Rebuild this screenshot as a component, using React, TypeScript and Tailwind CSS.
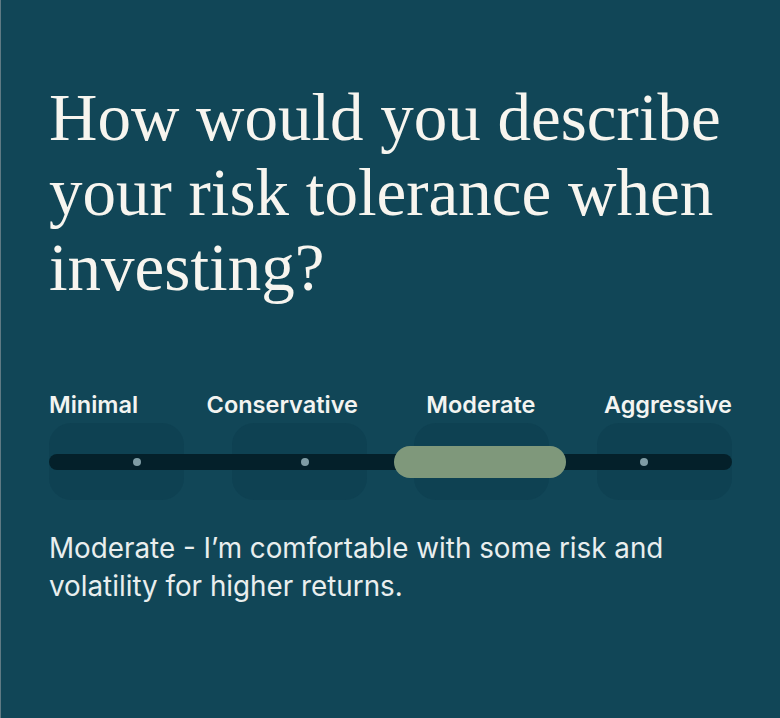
import { useState } from 'react';

const options = ['Minimal', 'Conservative', 'Moderate', 'Aggressive'];

export default function App() {
  const [selected, setSelected] = useState(2);

  return (
    <div className="min-h-[718px] w-[780px] bg-[#114657] border-l border-[#5f7a84] px-12 pt-[80px]">
      <h1 className="font-['Liberation_Serif',serif] text-[67px] leading-[75px] text-[#f7f5ef]">
        How would you describe your risk tolerance when investing?
      </h1>

      <div className="mt-[85px]">
        <div className="flex justify-between font-['Inter',sans-serif] text-[23.5px] font-semibold text-[#f3f4f1] leading-[30px]">
          {options.map((o) => (
            <span key={o}>{o}</span>
          ))}
        </div>

        <div className="relative mt-[3px] h-[77px]">
          <div className="flex h-full justify-between">
            {options.map((o, i) => (
              <button
                key={o}
                onClick={() => setSelected(i)}
                className="w-[135px] h-full rounded-[22px] bg-[#0b3a4a]/40"
              />
            ))}
          </div>
          <div className="absolute inset-x-0 top-[31px] flex h-4 items-center rounded-full bg-[#04202a] px-1">
            {options.map((o, i) => (
              <div key={o} className="flex flex-1 justify-center">
                {i === selected ? (
                  <span className="h-8 w-[172px] shrink-0 translate-x-[6px] rounded-full bg-[#7f987b]" />
                ) : (
                  <span className="h-2 w-2 rounded-full bg-[#7f9ca5]" />
                )}
              </div>
            ))}
          </div>
        </div>
      </div>

      <p className="mt-[29px] font-['Inter',sans-serif] text-[27.8px] leading-[38px] text-[#e9eeee]">
        Moderate - I’m comfortable with some risk and volatility for higher returns.
      </p>
    </div>
  );
}
